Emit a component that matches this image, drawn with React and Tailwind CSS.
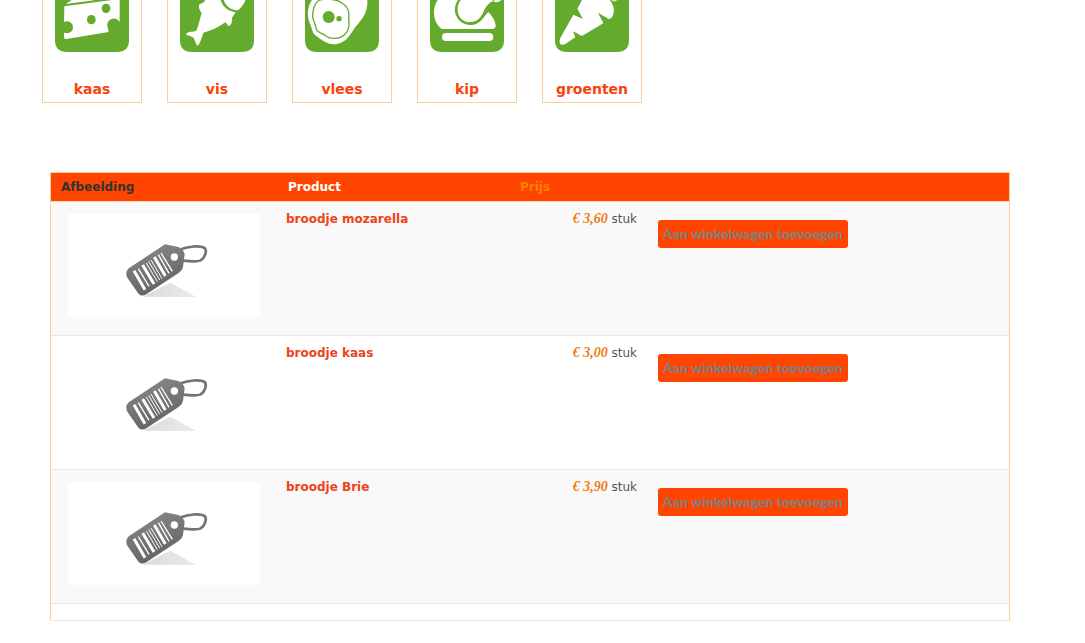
import React from "react";

const KaasIcon = () => (
  <svg viewBox="72 0 222 156" className="w-[74px] h-[52px]" aria-hidden="true">
    <path d="M72 0H294V120Q294 156 258 156H108Q72 156 72 120Z" fill="#63aa2d" />
    <path d="M122 0H187L190 1L104 12Z" fill="#fff" />
    <path d="M100 19L266 -3V66A18 18 0 0 0 231 84Q231 91 233 96L106 117Q99 118 99 111V98A18 18 0 0 0 99 65Z" fill="#fff" />
    <circle cx="108" cy="82" r="18" fill="#63aa2d" />
    <ellipse cx="181" cy="59" rx="13" ry="14" fill="#63aa2d" />
    <ellipse cx="225" cy="25" rx="13" ry="14" fill="#63aa2d" />
  </svg>
);

const VisIcon = () => (
  <svg viewBox="450 0 222 156" className="w-[74px] h-[52px]" aria-hidden="true">
    <path d="M450 0H672V120Q672 156 636 156H486Q450 156 450 120Z" fill="#63aa2d" />
    <path d="M526 0H572C577 19 594 34 617 37L606 53C608 65 604 74 597 78C591 76 591 71 586 67C567 81 545 92 520 98C516 111 512 126 504 137C498 136 496 123 491 114C484 107 471 108 468 102C475 92 489 97 499 92C507 75 509 57 515 39C510 33 505 23 507 15C513 9 521 10 526 0Z" fill="#fff" />
    <path d="M581 0H647C641 12 634 23 624 31C603 31 587 18 581 0Z" fill="#fff" />
  </svg>
);

const VleesIcon = () => (
  <svg viewBox="76 0 222 156" className="w-[74px] h-[52px]" aria-hidden="true">
    <path d="M76 0H298V120Q298 156 262 156H112Q76 156 76 120Z" fill="#63aa2d" />
    <path d="M97 0H263C265 31 252 53 235 72C216 91 207 126 172 132C145 136 127 121 111 109C96 99 99 87 90 69C82 48 83 19 97 0Z" fill="#fff" />
    <path d="M119 0C105 8 98 31 99 52C102 66 109 74 109 85C113 99 128 98 140 109C153 119 180 117 194 104C206 94 210 77 207 59C208 42 209 25 195 15C183 8 180 1 166 0C150 -3 134 -3 119 0Z" fill="none" stroke="#63aa2d" strokeWidth="4" />
    <circle cx="147" cy="51" r="18" fill="#63aa2d" />
    <circle cx="178" cy="56" r="8" fill="#63aa2d" />
  </svg>
);

const KipIcon = () => (
  <svg viewBox="449 0 222 156" className="w-[74px] h-[52px]" aria-hidden="true">
    <path d="M449 0H671V120Q671 156 635 156H485Q449 156 449 120Z" fill="#63aa2d" />
    <path d="M472 0H533C523 14 521 32 527 46C536 68 557 78 580 74C602 70 608 52 624 36C637 50 646 64 646 79Q645 87 635 87H485C470 77 461 59 461 38C461 23 465 10 472 0Z" fill="#fff" />
    <path d="M541 0H636C641 8 652 8 661 3V-2H638L643 2C625 5 616 21 609 36C602 53 591 65 572 66C550 68 532 53 532 29C531 18 535 8 541 0Z" fill="#fff" />
    <rect x="485" y="99" width="154" height="24" rx="12" fill="#fff" />
  </svg>
);

const GroentenIcon = () => (
  <svg viewBox="106 0 222 156" className="w-[74px] h-[52px]" aria-hidden="true">
    <path d="M106 0H328V120Q328 156 292 156H142Q106 156 106 120Z" fill="#63aa2d" />
    <path d="M187 0H270C281 12 285 28 281 42C278 52 273 57 267 57L235 38L251 70L188 107Q180 107 175 101L160 94L167 112L137 132Q128 137 121 131Q117 124 122 114L161 44L190 57L173 26Z" fill="#fff" />
    <path d="M272 0H294L285 5Z" fill="#d5eda0" />
  </svg>
);

const TagImage = () => (
  <svg viewBox="-126 -48 576 309" className="block w-[192px] h-[103px] bg-white" role="img" aria-label="Afbeelding">
    <defs>
      <linearGradient id="tagFill" x1="0" y1="0" x2="0.4" y2="1">
        <stop offset="0" stopColor="#8c8c8c" />
        <stop offset="1" stopColor="#646464" />
      </linearGradient>
      <linearGradient id="tagShadow" x1="0" y1="0" x2="1" y2="0">
        <stop offset="0" stopColor="#dadada" />
        <stop offset="1" stopColor="#ececec" />
      </linearGradient>
    </defs>
    <path d="M98 200L181 158L259 201Z" fill="url(#tagShadow)" />
    <path d="M212 58C235 50 269 45 284 54C292 63 285 83 272 91C257 98 239 92 218 92" fill="none" stroke="#737373" strokeWidth="8" />
    <path d="M165 43L205 51Q220 57 224 72L219 111Q217 122 207 128L109 193Q96 201 86 192L53 145Q43 129 56 115Z" fill="url(#tagFill)" />
    <circle cx="193" cy="81" r="11" fill="#fff" />
    <g stroke="#fff">
      <path d="M72 122L105 179" strokeWidth="9" />
      <path d="M85 116L117 169" strokeWidth="4" />
      <path d="M98 105L132 162" strokeWidth="9" />
      <path d="M109 99L142 155" strokeWidth="3" />
      <path d="M116 94L149 150" strokeWidth="3" />
      <path d="M123 90L156 146" strokeWidth="3" />
      <path d="M133 81L166 138" strokeWidth="9" />
      <path d="M145 74L177 130" strokeWidth="4" />
      <path d="M153 69L187 124" strokeWidth="4" />
    </g>
  </svg>
);

const categories = [
  { name: "kaas", Icon: KaasIcon },
  { name: "vis", Icon: VisIcon },
  { name: "vlees", Icon: VleesIcon },
  { name: "kip", Icon: KipIcon },
  { name: "groenten", Icon: GroentenIcon },
];

const products = [
  { name: "broodje mozarella", price: "3,60" },
  { name: "broodje kaas", price: "3,00" },
  { name: "broodje Brie", price: "3,90" },
];

function App() {
  return (
    <main className="bg-white pb-6 font-['Verdana','DejaVu_Sans',sans-serif] text-[12px] leading-4 text-[#555]">
      <nav className="flex flex-wrap gap-[25px] pl-[42px]">
        {categories.map(({ name, Icon }) => (
          <a
            key={name}
            href="#producten"
            className="flex w-[100px] flex-col items-center border border-t-0 border-[#fbcf9b] text-[14px] leading-5 font-bold text-[#f8430b]"
          >
            <Icon />
            <span className="mt-[27px] mb-[3px]">{name}</span>
          </a>
        ))}
      </nav>

      <div className="mt-[69px] mr-[75px] ml-[50px]">
        <table id="producten" className="w-full table-fixed border-separate border-spacing-0 border border-[#f9d09a] border-b-[#e8e8e8]">
          <colgroup>
            <col className="w-[227px]" />
            <col className="w-[232px]" />
            <col className="w-[135px]" />
            <col />
          </colgroup>
          <thead>
            <tr className="h-[29px] bg-[#ff4500] text-left">
              <th className="border-b border-[#f9d9a8] px-[10px] text-[#333]">Afbeelding</th>
              <th className="border-b border-[#f9d9a8] px-[10px] text-white">Product</th>
              <th className="border-b border-[#f9d9a8] px-[10px] text-[#ff8000]">Prijs</th>
              <th className="border-b border-[#f9d9a8]"></th>
            </tr>
          </thead>
          <tbody>
            {products.map((product) => (
              <tr key={product.name} className="h-[134px] align-top odd:bg-[#f9f9f9]">
                <td className="border-b border-[#e8e8e8] pt-3 pl-[17px]">
                  <TagImage />
                </td>
                <td className="border-b border-[#e8e8e8] px-2 pt-[9px]">
                  <a href="#producten" className="font-bold text-[#ee4218]">{product.name}</a>
                </td>
                <td className="border-b border-[#e8e8e8] px-2 pt-[9px] text-right">
                  <span className="font-['Liberation_Serif',serif] text-[14px] font-bold text-[#ee7a10] italic">€ {product.price}</span> stuk
                </td>
                <td className="border-b border-[#e8e8e8] pt-[18px] pl-[13px]">
                  <button type="button" className="block h-7 rounded-[3px] bg-[#ff4500] px-[5px] font-['Lato',sans-serif] text-[14px] font-black whitespace-nowrap text-[#808080]">
                    Aan winkelwagen toevoegen
                  </button>
                </td>
              </tr>
            ))}
            <tr className="h-4">
              <td colSpan={4}></td>
            </tr>
          </tbody>
        </table>
      </div>
    </main>
  );
}

export default App;
